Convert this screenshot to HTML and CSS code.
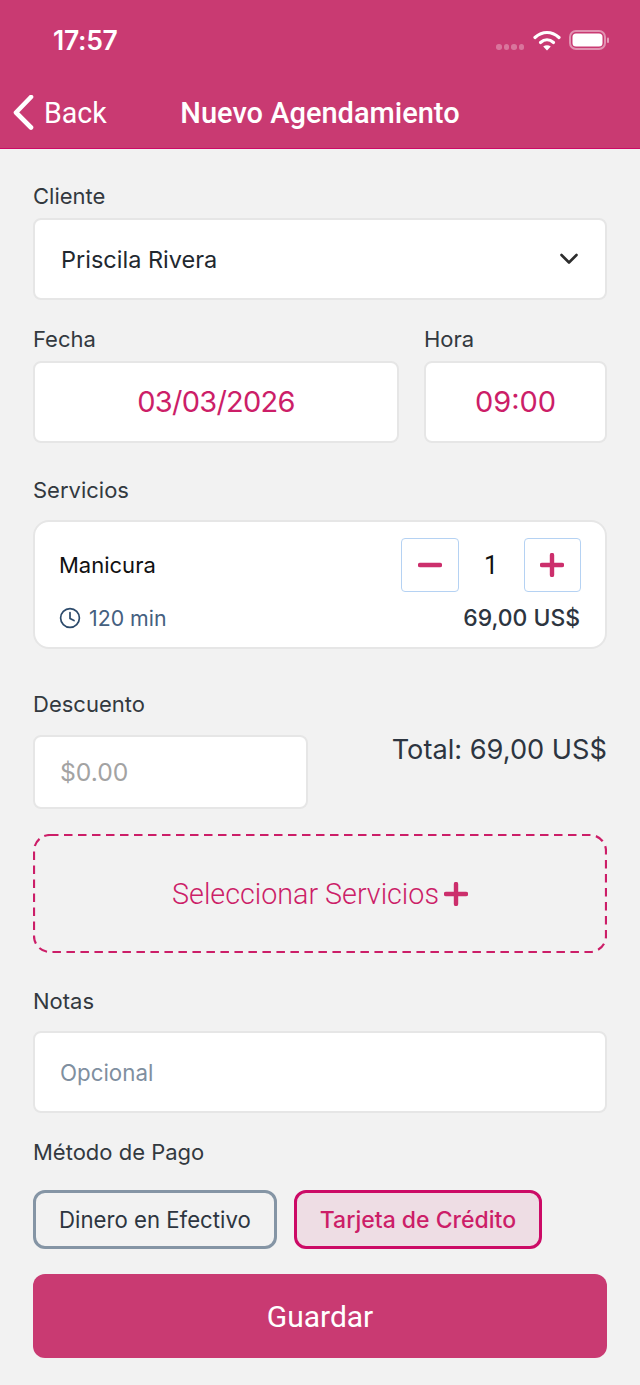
FILE: index.html
```html
<!DOCTYPE html>
<html lang="es">
<head>
<meta charset="utf-8">
<title>Nuevo Agendamiento</title>
<link rel="stylesheet" href="styles.css">
</head>
<body>
<header class="header">
  <div class="status">
    <span class="time">17:57</span>
    <div class="status-icons">
      <span class="dots"><i></i><i></i><i></i><i></i></span>
      <svg class="wifi" width="28" height="21" viewBox="0 0 28 21"><path d="M2 7.5C9.5 .8 18.5 .8 26 7.5" fill="none" stroke="#fff" stroke-width="3.2" stroke-linecap="round"/><path d="M7.5 12.5C11.5 9 16.5 9 20.5 12.5" fill="none" stroke="#fff" stroke-width="3.2" stroke-linecap="round"/><path d="M14 20.5L10.2 16.6C12.5 14.8 15.5 14.8 17.8 16.6Z" fill="#fff"/></svg>
      <svg class="battery" width="41" height="20" viewBox="0 0 41 20"><rect x="1" y="1" width="35" height="18" rx="6" fill="none" stroke="#fff" stroke-opacity=".45" stroke-width="2"/><rect x="3.5" y="3.5" width="30" height="13" rx="3.5" fill="#fff"/><rect x="38" y="7.5" width="2" height="5.5" rx="1" fill="#fff" fill-opacity=".5"/></svg>
    </div>
  </div>
  <nav class="nav">
    <div class="back">
      <svg width="22" height="36" viewBox="0 0 22 36"><path d="M19 3L4 18.5 19 33.5" transform="translate(0 -1)" fill="none" stroke="#fff" stroke-width="4.6" stroke-linecap="round" stroke-linejoin="round"/></svg>
      <span>Back</span>
    </div>
    <h1 class="title">Nuevo Agendamiento</h1>
  </nav>
</header>
<main class="form">
  <div class="label l-cliente">Cliente</div>
  <div class="box select"><span>Priscila Rivera</span>
    <svg width="20" height="14" viewBox="0 0 20 14"><path d="M2.5 3L10 10.5 17.5 3" fill="none" stroke="#2d2d2d" stroke-width="2.6" stroke-linecap="round" stroke-linejoin="round"/></svg>
  </div>
  <div class="row-date">
    <div class="col-date"><div class="label">Fecha</div><div class="box picker date">03/03/2026</div></div>
    <div class="col-time"><div class="label">Hora</div><div class="box picker">09:00</div></div>
  </div>
  <div class="label l-serv">Servicios</div>
  <div class="card">
    <div class="card-row">
      <span class="svc">Manicura</span>
      <div class="stepper">
        <span class="step"><svg width="24" height="24" viewBox="0 0 24 24"><path d="M2 12H22" stroke="#cc2f6c" stroke-width="4.4" stroke-linecap="round"/></svg></span>
        <span class="qty">1</span>
        <span class="step"><svg width="24" height="24" viewBox="0 0 24 24"><path d="M2 12H22M12 2V22" stroke="#cc2f6c" stroke-width="4.4" stroke-linecap="round"/></svg></span>
      </div>
    </div>
    <div class="card-row low">
      <span class="dur"><svg width="22" height="22" viewBox="0 0 22 22"><circle cx="11" cy="11" r="9.4" fill="none" stroke="#2c4a6b" stroke-width="1.7"/><path d="M11 5.5V11.5L15 13.5" fill="none" stroke="#2c4a6b" stroke-width="1.7" stroke-linecap="round" stroke-linejoin="round"/></svg>120 min</span>
      <span class="price">69,00 US$</span>
    </div>
  </div>
  <div class="label l-desc">Descuento</div>
  <div class="row-disc">
    <div class="box disc">$0.00</div>
    <div class="total">Total: 69,00 US$</div>
  </div>
  <div class="add">
    <svg class="dash" width="574" height="119" viewBox="0 0 574 119"><rect x="1" y="1" width="572" height="117" rx="16" fill="none" stroke="#cc1e68" stroke-width="2.2" stroke-dasharray="8.5 5.5"/></svg>
    <span>Seleccionar Servicios</span>
    <svg width="24" height="24" viewBox="0 0 24 24"><path d="M2 12H22M12 2V22" stroke="#cc2f6c" stroke-width="4.4" stroke-linecap="round"/></svg>
  </div>
  <div class="label l-notas">Notas</div>
  <div class="box notes">Opcional</div>
  <div class="label l-pago">Método de Pago</div>
  <div class="pay">
    <span class="opt">Dinero en Efectivo</span>
    <span class="opt on">Tarjeta de Crédito</span>
  </div>
  <div class="save">Guardar</div>
</main>
</body>
</html>
```

FILE: styles.css
```css
* { box-sizing: border-box; }
html, body { margin: 0; padding: 0; }
body { width: 640px; height: 1385px; overflow: hidden; background: #f2f2f2; font-family: Inter, "Liberation Sans", sans-serif; color: #2d3540; }
.header { height: 149px; background: #c93a72; border-bottom: 1px solid #cc0a66; color: #fff; font-family: Roboto, sans-serif; }
.status { height: 78px; display: flex; justify-content: space-between; align-items: flex-start; padding: 26px 30px 0 53px; }
.time { font-family: Inter, sans-serif; font-weight: 600; font-size: 26.5px; line-height: 28px; letter-spacing: -.3px; }
.status-icons { display: flex; align-items: flex-start; padding-top: 4px; }
.dots { display: flex; gap: 2px; margin: 14px 9px 0 0; }
.dots i { width: 5.5px; height: 5.5px; border-radius: 50%; background: rgba(255,255,255,.3); }
.wifi { margin-right: 8px; }
.nav { position: relative; height: 70px; display: flex; justify-content: center; align-items: center; }
.back { position: absolute; left: 12px; top: 17px; display: flex; align-items: center; gap: 10px; font-size: 28.6px; font-weight: 400; line-height: 36px; }
.title { margin: 0; font-size: 29px; font-weight: 500; line-height: 36px; }
.form { padding: 0 33px; }
.label { font-size: 22px; line-height: 28px; color: #33393f; }
.l-cliente { margin-top: 33px; }
.box { background: #fff; border: 2px solid #e6e6e6; border-radius: 8px; }
.select { margin-top: 8px; height: 82px; display: flex; align-items: center; justify-content: space-between; padding: 0 26px; font-size: 23.5px; color: #22282f; }
.row-date { display: flex; gap: 25px; margin-top: 25px; }
.col-date { width: 366px; }
.col-time { width: 183px; }
.picker { margin-top: 8px; height: 82px; display: flex; align-items: center; justify-content: center; font-family: Inter, sans-serif; font-size: 29px; color: #cc1e68; padding-bottom: 2px; }
.date { letter-spacing: -.75px; }
.l-serv { margin-top: 33px; }
.card { margin-top: 16px; height: 129px; background: #fff; border: 2px solid #e6e6e6; border-radius: 16px; padding: 16px 24px 0 24px; }
.card-row { display: flex; justify-content: space-between; align-items: center; }
.svc { font-size: 22px; color: #111; }
.stepper { display: flex; align-items: center; }
.step { width: 57.5px; height: 54px; border: 1.5px solid #b5d2f3; border-radius: 4px; display: flex; align-items: center; justify-content: center; }
.qty { width: 65px; text-align: center; font-size: 25px; color: #111; font-family: Roboto, sans-serif; }
.low { margin-top: 12px; }
.dur { display: flex; align-items: center; gap: 8px; font-size: 21.3px; color: #456080; }
.price { font-size: 22.9px; font-weight: 500; color: #2d3540; padding-right: 1px; }
.l-desc { margin-top: 41px; }
.row-disc { display: flex; justify-content: space-between; margin-top: 17px; }
.disc { width: 275px; height: 74px; display: flex; align-items: center; padding-left: 25px; font-size: 24.7px; color: #a3a3a3; }
.total { font-size: 27.2px; font-weight: 400; line-height: 32px; margin-top: -1px; }
.add { position: relative; margin-top: 25px; height: 119px; display: flex; align-items: center; justify-content: center; gap: 5px; font-family: Roboto, sans-serif; font-size: 28.7px; font-weight: 300; color: #cc1e68; }
.dash { position: absolute; left: 0; top: 0; }
.l-notas { margin-top: 34px; }
.notes { margin-top: 16px; height: 82px; display: flex; align-items: center; padding-left: 25px; font-size: 22.3px; color: #7f8fa0; }
.l-pago { margin-top: 25px; }
.pay { display: flex; gap: 17px; margin-top: 24px; }
.opt { height: 59px; padding: 0 23px; border: 3px solid #8595a5; border-radius: 12px; display: flex; align-items: center; font-size: 22.2px; color: #2d3540; }
.on { border-color: #cc0a66; background: #eedde4; color: #cc1e68; font-weight: 500; font-size: 23px; }
.save { margin-top: 25px; height: 84px; background: #c93a72; border-radius: 12px; display: flex; align-items: center; justify-content: center; font-family: Roboto, sans-serif; font-size: 30px; color: #fff; }
```
